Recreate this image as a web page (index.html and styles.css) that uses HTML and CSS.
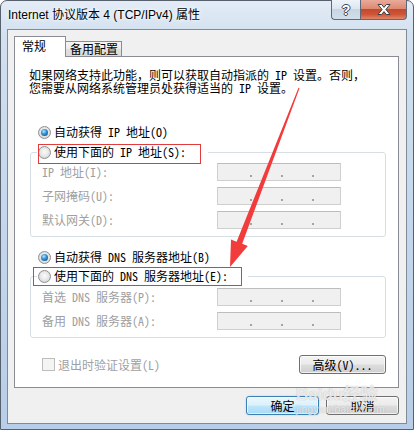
FILE: index.html
```html
<html>
<head>
  <link rel="stylesheet" href="styles.css">
</head>
<body>
  <div class="window">
    <div class="titlebar">
      <span class="title">Internet 协议版本 4 (TCP/IPv4) 属性</span>
      <div class="caption">
        <div class="cap-btn help">?</div>
        <div class="cap-btn close">
          <svg width="14" height="11" viewBox="0 0 14 11">
            <polygon points="1,0.5 4.6,0.5 7,3.4 9.4,0.5 13,0.5 8.9,5.5 13,10.5 9.4,10.5 7,7.6 4.6,10.5 1,10.5 5.1,5.5" fill="#fff" stroke="#3a3f45" stroke-width="1"/>
          </svg>
        </div>
      </div>
    </div>

    <div class="client">
      <div class="tabs">
        <div class="tab active">常规</div>
        <div class="tab">备用配置</div>
      </div>

      <div class="panel">
        <p class="intro">如果网络支持此功能，则可以获取自动指派的 IP 设置。否则，<br>您需要从网络系统管理员处获得适当的 IP 设置。</p>

        <div class="option first"><span class="radio on"></span>自动获得 IP 地址(O)</div>
        <div class="option legend ip"><span class="radio"></span>使用下面的 IP 地址(S):</div>
        <div class="group ip">
          <div class="field"><span class="label">IP 地址(I):</span><span class="ipbox"><i></i><i></i><i></i></span></div>
          <div class="field"><span class="label">子网掩码(U):</span><span class="ipbox"><i></i><i></i><i></i></span></div>
          <div class="field"><span class="label">默认网关(D):</span><span class="ipbox"><i></i><i></i><i></i></span></div>
        </div>

        <div class="option dns-auto"><span class="radio on"></span>自动获得 DNS 服务器地址(B)</div>
        <div class="option legend dns"><span class="radio"></span>使用下面的 DNS 服务器地址(E):</div>
        <div class="group dns">
          <div class="field"><span class="label">首选 DNS 服务器(P):</span><span class="ipbox"><i></i><i></i><i></i></span></div>
          <div class="field"><span class="label">备用 DNS 服务器(A):</span><span class="ipbox"><i></i><i></i><i></i></span></div>
        </div>

        <div class="check-row">
          <span class="checkbox"></span>
          <span class="disabled">退出时验证设置(L)</span>
          <div class="btn advanced">高级(V)...</div>
        </div>
      </div>

      <div class="buttons">
        <div class="btn default">确定</div>
        <div class="btn">取消</div>
      </div>
    </div>
  </div>

  <!-- marks drawn on top of the screenshot -->
  <div class="mark mark-ip"></div>
  <div class="mark mark-dns"></div>
  <svg class="arrow" width="414" height="430" viewBox="0 0 414 430">
    <polygon points="298.5,87.8 299.5,88.2 242.2,243.8 247.8,246 230,267 231,239.5 236.6,241.7" fill="#f23c3c"/>
  </svg>

  <div class="watermark">
    <span class="wm-big">Bai<b>du</b>经验</span>
    <span class="wm-url">jingyan.baidu.com</span>
  </div>
</body>
</html>
```

FILE: styles.css
```css
* {
    box-sizing: border-box;
    margin: 0;
    padding: 0;
}

body {
    width: 414px;
    height: 430px;
    overflow: hidden;
    position: relative;
    background: #fff;
    font-family: "Noto Sans Mono CJK SC", "Noto Sans CJK SC", sans-serif;
    font-size: 12px;
    color: #000;
}

.window {
    width: 414px;
    height: 430px;
    border: 1px solid #56616d;
    border-radius: 7px 7px 0 0;
    padding: 0 6px 5px 6px;
    display: flex;
    flex-direction: column;
    background: linear-gradient(180deg, #e3ecf6 0%, #d2e0ef 8%, #c4d7ec 50%, #b8cee8 100%);
}

.titlebar {
    height: 28px;
    flex-shrink: 0;
    display: flex;
    align-items: flex-start;
}

.title {
    margin: 7px 0 0 1px;
    font-family: "Liberation Sans", "Noto Sans CJK SC", sans-serif;
    font-size: 12px;
    line-height: 14px;
    text-shadow: 0 0 6px #fff, 0 0 3px #fff;
}

.caption {
    margin-left: auto;
    margin-top: -1px;
    display: flex;
}

.cap-btn {
    height: 20px;
    border: 1px solid #5d6976;
    border-top: none;
    display: flex;
    align-items: center;
    justify-content: center;
}

.help {
    width: 29px;
    border-right: none;
    border-radius: 0 0 0 4px;
    background: linear-gradient(180deg, #eef3f9 0%, #dde6f0 45%, #c7d4e2 47%, #d3deea 100%);
    font-family: "Liberation Sans", sans-serif;
    font-weight: bold;
    font-size: 14px;
    color: #fff;
    text-shadow: -1px 0 #3b4754, 1px 0 #3b4754, 0 -1px #3b4754, 0 1px #3b4754;
}

.close {
    width: 47px;
    border-radius: 0 0 4px 0;
    background: linear-gradient(180deg, #eaaa9a 0%, #dc8a73 45%, #c8452b 47%, #cd5437 75%, #e08768 100%);
}

.client {
    flex: 1;
    border: 1px solid #808b98;
    background: #f0f0f0;
    padding: 6px 7px 0 6px;
}

.tabs {
    height: 20px;
    display: flex;
    align-items: flex-end;
}

.tab {
    width: 57px;
    height: 15px;
    margin-left: -1px;
    border: 1px solid #898c95;
    border-bottom: none;
    padding-left: 4px;
    line-height: 14px;
    background: linear-gradient(180deg, #f5f5f5 0%, #ececec 50%, #e0e0e0 51%, #dadada 100%);
}

.tab.active {
    width: 52px;
    height: 21px;
    margin-left: 0;
    margin-bottom: -1px;
    padding-left: 7px;
    line-height: 18px;
    background: #fff;
    position: relative;
    z-index: 1;
}

.panel {
    height: 332px;
    border: 1px solid #898c95;
    background: #fff;
    padding: 11px 12px 0 14px;
}

.intro {
    line-height: 13px;
    white-space: nowrap;
}

.option {
    height: 16px;
    line-height: 16px;
    display: flex;
    align-items: center;
    gap: 3px;
    padding-left: 9px;
    white-space: nowrap;
}

.option.first {
    margin-top: 30px;
}

.option.legend {
    margin-top: 4px;
    margin-left: 8px;
    padding-left: 1px;
    background: #fff;
    position: relative;
    z-index: 1;
}

.option.legend.ip {
    width: 171px;
}

.option.legend.dns {
    width: 211px;
    margin-top: 3px;
}

.option.dns-auto {
    margin-top: 12px;
}

.radio {
    width: 13px;
    height: 13px;
    flex-shrink: 0;
    border-radius: 50%;
    border: 1px solid #8e8f91;
    background: radial-gradient(circle at 50% 45%, #fbfbfb 0%, #e9e9e9 45%, #c9cacc 100%);
    display: flex;
    align-items: center;
    justify-content: center;
}

.radio.on::after {
    content: "";
    width: 7px;
    height: 7px;
    border-radius: 50%;
    background: radial-gradient(circle at 40% 35%, #b9e6ff 0%, #3a95d6 40%, #14598f 80%, #0c3c66 100%);
}

.group {
    margin-top: -8px;
    margin-left: 1px;
    border: 1px solid #d5dfe5;
    border-radius: 3px;
    padding: 10px 0 7px 0;
    display: flex;
    flex-direction: column;
    gap: 6px;
}

.group.dns {
    padding-top: 11px;
}

.field {
    height: 18px;
    line-height: 18px;
    display: flex;
    align-items: center;
    padding-left: 11px;
    color: #a0a0a0;
}

.label {
    width: 175px;
    white-space: nowrap;
}

.ipbox {
    width: 124px;
    height: 18px;
    border: 1px solid #cfcfcf;
    border-top-color: #bdbdbd;
    background: #f0f0f0;
    display: flex;
    align-items: flex-end;
    gap: 29px;
    padding: 0 0 3px 32px;
}

.ipbox i {
    width: 2px;
    height: 2px;
    background: #a3a3a3;
}

.check-row {
    margin-top: 17px;
    margin-left: 13px;
    height: 19px;
    display: flex;
    align-items: center;
    gap: 3px;
}

.checkbox {
    width: 13px;
    height: 13px;
    border: 1px solid #bdbdbd;
    background: #f4f4f4;
}

.disabled {
    color: #a0a0a0;
}

.btn {
    width: 73px;
    height: 19px;
    border: 1px solid #707070;
    border-radius: 3px;
    background: linear-gradient(180deg, #f3f3f3 0%, #ebebeb 48%, #dddddd 52%, #cfcfcf 100%);
    box-shadow: inset 0 0 0 1px rgba(255, 255, 255, 0.7);
    text-align: center;
    line-height: 17px;
    white-space: nowrap;
}

.btn.advanced {
    width: 87px;
    margin-left: auto;
}

.btn.default {
    border-color: #3c7fb1;
    background: linear-gradient(180deg, #ebf7fd 0%, #dbf1fc 48%, #bfe6fc 52%, #a7d9f5 100%);
    box-shadow: inset 0 0 0 1px rgba(255, 255, 255, 0.6), 0 0 2px #9fd4f3;
}

.buttons {
    margin-top: 8px;
    display: flex;
    justify-content: flex-end;
    gap: 7px;
}

.mark {
    position: absolute;
    z-index: 2;
    border: 1px solid #e23b3b;
}

.mark-ip {
    left: 38px;
    top: 144px;
    width: 163px;
    height: 20px;
}

.mark-dns {
    left: 33px;
    top: 267px;
    width: 209px;
    height: 19px;
}

.arrow {
    position: absolute;
    z-index: 3;
    left: 0;
    top: 0;
}

.watermark {
    position: absolute;
    z-index: 3;
    left: 296px;
    top: 385px;
    display: flex;
    flex-direction: column;
    color: rgba(255, 255, 255, 0.75);
    text-shadow: 0 0 1px rgba(110, 110, 110, 0.55);
    font-family: "Liberation Sans", "Noto Sans CJK SC", sans-serif;
}

.wm-big {
    font-size: 17px;
    font-weight: bold;
    line-height: 20px;
}

.wm-url {
    font-size: 10px;
    line-height: 10px;
    letter-spacing: 0.5px;
}
```
